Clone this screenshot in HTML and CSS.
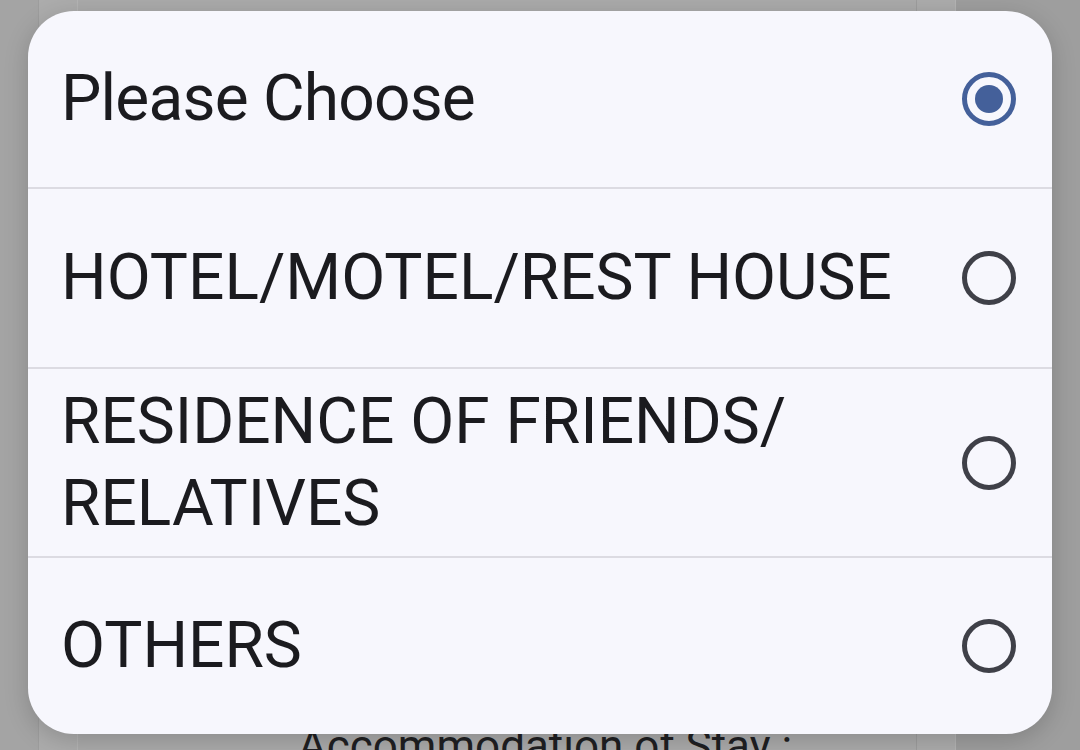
FILE: index.html
```html
<!DOCTYPE html>
<html lang="en">
<head>
<meta charset="utf-8">
<title>Accommodation of Stay</title>
<link rel="stylesheet" href="styles.css">
</head>
<body>
<div class="backdrop">
  <div class="gutter"></div>
  <div class="col"></div>
  <div class="main">
    <div class="field-label">Accommodation of Stay :</div>
  </div>
  <div class="col"></div>
  <div class="side"></div>
</div>

<div class="sheet" role="radiogroup">
  <div class="option">
    <span class="label choose">Please Choose</span>
    <svg class="radio" viewBox="0 0 56 56" width="56" height="56" aria-hidden="true">
      <circle cx="28" cy="28" r="24.5" fill="none" stroke="#44609a" stroke-width="5"/>
      <circle cx="28" cy="28" r="14" fill="#44609a"/>
    </svg>
  </div>
  <div class="sep"></div>
  <div class="option">
    <span class="label">HOTEL/MOTEL/REST HOUSE</span>
    <svg class="radio" viewBox="0 0 56 56" width="56" height="56" aria-hidden="true">
      <circle cx="28" cy="28" r="24.5" fill="none" stroke="#3f4048" stroke-width="5"/>
    </svg>
  </div>
  <div class="sep"></div>
  <div class="option tall">
    <span class="label">RESIDENCE OF FRIENDS/<wbr>RELATIVES</span>
    <svg class="radio" viewBox="0 0 56 56" width="56" height="56" aria-hidden="true">
      <circle cx="28" cy="28" r="24.5" fill="none" stroke="#3f4048" stroke-width="5"/>
    </svg>
  </div>
  <div class="sep"></div>
  <div class="option">
    <span class="label">OTHERS</span>
    <svg class="radio" viewBox="0 0 56 56" width="56" height="56" aria-hidden="true">
      <circle cx="28" cy="28" r="24.5" fill="none" stroke="#3f4048" stroke-width="5"/>
    </svg>
  </div>
</div>
</body>
</html>
```

FILE: styles.css
```css
html, body {
  margin: 0;
  padding: 0;
}
body {
  width: 1080px;
  height: 750px;
  overflow: hidden;
  background: #a9a9a9;
  font-family: Roboto, "Noto Sans", sans-serif;
  position: relative;
}
.backdrop {
  display: flex;
  height: 750px;
}
.gutter {
  width: 38px;
  background: #a4a4a4;
}
.col {
  width: 40px;
  background: #acacac;
  border-left: 1px solid #9d9d9d;
  border-right: 1px solid #b4b4b4;
  box-sizing: border-box;
}
.main {
  flex: 1;
  background: #aaaaaa;
  display: flex;
  align-items: flex-end;
}
.field-label {
  margin: 0 0 -22px 220px;
  font-size: 44px;
  color: #1f1f22;
}
.side {
  width: 124px;
  background: #9e9e9e;
}
.sheet {
  position: absolute;
  left: 28px;
  top: 11px;
  width: 1024px;
  height: 723px;
  background: #f7f7fd;
  border-radius: 46px;
  box-shadow: 0 6px 24px rgba(0, 0, 0, 0.18);
  display: flex;
  flex-direction: column;
  overflow: hidden;
}
.option {
  height: 176px;
  display: flex;
  align-items: center;
  gap: 40px;
  padding: 0 35px 0 33px;
}
.option:nth-child(3) {
  height: 178px;
}
.option.tall {
  height: 187px;
}
.label {
  flex: 1;
  font-size: 64px;
  line-height: 82px;
  color: #1b1b1f;
}
.label.choose {
  letter-spacing: -0.8px;
}
.radio {
  flex: none;
  display: block;
}
.sep {
  height: 2px;
  background: #dcdbe2;
}
```
